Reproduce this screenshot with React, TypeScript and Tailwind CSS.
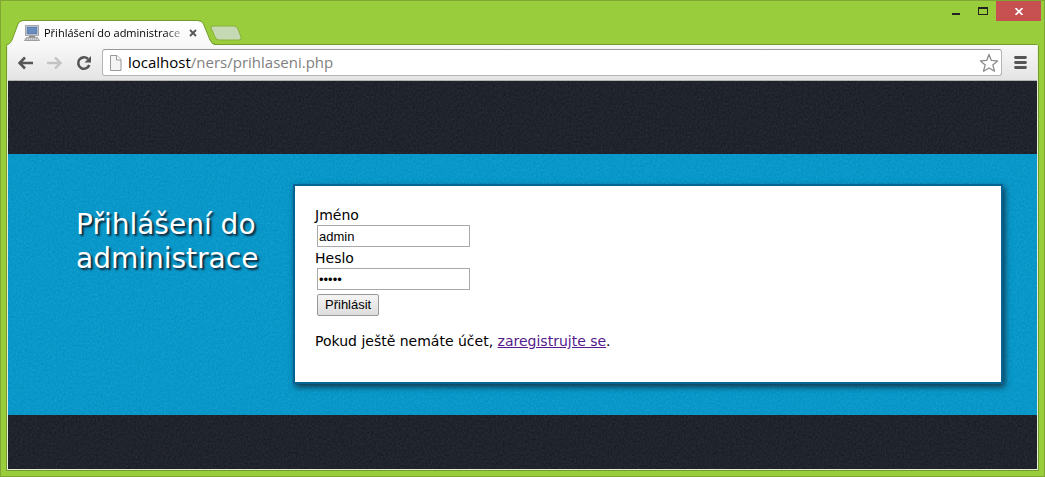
import React from "react";

type TextureProps = { id: string; strength: number };

function Texture({ id, strength }: TextureProps) {
  return (
    <svg className="pointer-events-none absolute inset-0 h-full w-full" aria-hidden="true">
      <filter id={id} x="0" y="0" width="100%" height="100%" colorInterpolationFilters="sRGB">
        <feTurbulence type="fractalNoise" baseFrequency="0.6 0.45" numOctaves="2" />
        <feColorMatrix type="saturate" values="0" />
        <feComponentTransfer>
          <feFuncR type="linear" slope="1.6" intercept="-0.3" />
          <feFuncG type="linear" slope="1.6" intercept="-0.3" />
          <feFuncB type="linear" slope="1.6" intercept="-0.3" />
          <feFuncA type="linear" slope="0" intercept="1" />
        </feComponentTransfer>
      </filter>
      <rect width="100%" height="100%" filter={`url(#${id})`} opacity={strength} />
    </svg>
  );
}

function TabStrip() {
  return (
    <div className="relative flex h-[45px] justify-between">
      <div className="relative z-10 ml-[5px] mt-5 h-[25px] w-[240px]">
        <svg className="absolute inset-0" width="240" height="25" viewBox="0 0 240 25" aria-hidden="true">
          <defs>
            <linearGradient id="tab-fill" x1="0" y1="0" x2="0" y2="1">
              <stop offset="0" stopColor="#ffffff" />
              <stop offset="1" stopColor="#f8f8f8" />
            </linearGradient>
          </defs>
          <path
            d="M1 25 C4 24 5 22 6 20 L12 4 Q13.500 1 17 1 H192 Q196 1 197.500 4 L204 20 Q206 25 210 25 Z"
            fill="url(#tab-fill)"
          />
          <path
            d="M0 25 C4 24 5 22 6 20 L12 4 Q13.500 .5 17 .5 H192 Q196 .5 197.500 4 L204 20 Q206 24.500 210 24.500"
            fill="none"
            stroke="#739b2d"
          />
          <path
            d="M207 6 H228 Q231 6 232 9 L235 17 Q236 20 233 20 H213 Q210 20 209 17 L205 8 Q204 6 207 6Z"
            fill="#c5d9b4"
            stroke="#86b136"
          />
        </svg>
        <div className="relative flex h-full items-center pl-[18px]">
          <svg width="16" height="16" viewBox="0 0 16 16" aria-hidden="true">
            <rect x="1.500" y=".5" width="13" height="10" fill="#dedede" stroke="#a8a8a8" />
            <rect x="3" y="2" width="10" height="7" fill="#6a8dc0" stroke="#4c6d9f" strokeWidth=".6" />
            <path d="M5 11h6v1H5z" fill="#888" />
            <path d="M2.500 12.500h11l2 3H.5z" fill="#d4d4d4" stroke="#8c8c8c" strokeWidth=".8" />
            <path d="M2 14h12" stroke="#909090" strokeDasharray="1 1" />
          </svg>
          <span className="ml-1 w-[139px] whitespace-nowrap bg-gradient-to-r from-black from-85% to-[#ccc] bg-clip-text font-['Open_Sans',sans-serif] text-[11px] leading-4 text-transparent">
            Přihlášení do administrace
          </span>
          <button type="button" aria-label="Zavřít kartu" className="ml-0.5 flex size-4 items-center justify-center">
            <svg width="8" height="8" viewBox="0 0 8 8">
              <path d="M1 1l6 6M7 1L1 7" stroke="#555" strokeWidth="1.800" />
            </svg>
          </button>
        </div>
      </div>
      <div className="mr-[3px] flex h-[21px] pt-px">
        <button type="button" aria-label="Minimalizovat" className="flex w-[27px] items-center justify-center">
          <svg width="10" height="10" viewBox="0 0 10 10">
            <path d="M1 7h8v2H1z" fill="#222" />
          </svg>
        </button>
        <button type="button" aria-label="Maximalizovat" className="flex w-[27px] items-center justify-center">
          <svg width="10" height="8" viewBox="0 0 10 8">
            <path d="M0 0h10v8H0zM1 2v5h8V2z" fill="#222" fillRule="evenodd" />
          </svg>
        </button>
        <button type="button" aria-label="Zavřít" className="flex w-[45px] items-center justify-center bg-[#c75050]">
          <svg width="8" height="7" viewBox="0 0 8 7">
            <path d="M.5 0l7 7M7.500 0l-7 7" stroke="#fff" strokeWidth="1.700" />
          </svg>
        </button>
      </div>
    </div>
  );
}

function Toolbar() {
  return (
    <div className="flex h-9 items-center border-b border-[#b5b5b5] bg-gradient-to-b from-[#f8f8f8] to-[#e4e4e4] pl-[10px] pr-[9px]">
      <button type="button" aria-label="Zpět">
        <svg width="15" height="14" viewBox="0 0 15 14">
          <path d="M7 1.500L1.500 7 7 12.500M2 7h13" fill="none" stroke="#555" strokeWidth="2.600" />
        </svg>
      </button>
      <button type="button" aria-label="Vpřed" className="ml-[14px]">
        <svg width="15" height="14" viewBox="0 0 15 14">
          <path d="M8 1.500L13.500 7 8 12.500M13 7H0" fill="none" stroke="#c3c3c3" strokeWidth="2.400" />
        </svg>
      </button>
      <button type="button" aria-label="Obnovit" className="ml-[14px]">
        <svg width="16" height="16" viewBox="0 0 16 16">
          <path d="M12 4A5.700 5.700 0 1 0 13.300 10" fill="none" stroke="#555" strokeWidth="2.600" />
          <path d="M15 1v6.500H8.500z" fill="#555" />
        </svg>
      </button>
      <div className="ml-[10px] flex h-[27px] flex-1 items-center rounded-[3px] border border-[#b4b4b4] border-t-[#999] bg-white px-[6px]">
        <svg width="13" height="16" viewBox="0 0 13 16" aria-hidden="true">
          <path d="M1.500 .5h6.500L12 4.500v11H1.500z" fill="#f4f4f4" stroke="#999" />
          <path d="M7.500 .5v4.500h4.500" fill="#fff" stroke="#999" />
        </svg>
        <div className="mb-0.5 ml-[6px] flex-1 font-['Open_Sans',sans-serif] text-[15px] leading-5 text-[#808080]">
          <span className="text-black">localhost</span>/ners/prihlaseni.php
        </div>
        <button type="button" aria-label="Přidat záložku" className="-mr-1">
          <svg width="20" height="20" viewBox="0 0 20 20">
            <path
              d="M10 1.500l2.300 5.900 6.200.5-4.700 4 1.700 6.300L10 15l-5.500 3.200 1.700-6.300-4.700-4 6.200-.5z"
              fill="#fff"
              stroke="#8b8b8b"
              strokeWidth="1.300"
              strokeLinejoin="round"
            />
          </svg>
        </button>
      </div>
      <button type="button" aria-label="Nabídka" className="ml-[11px]">
        <svg width="15" height="13" viewBox="0 0 15 13">
          <path d="M2.500 1.500h10M2.500 6.500h10M2.500 11.500h10" stroke="#555" strokeWidth="2.800" strokeLinecap="round" />
        </svg>
      </button>
    </div>
  );
}

function LoginForm() {
  return (
    <div className="min-h-[200px] flex-1 border-2 border-[#046392] bg-white px-5 pb-[30px] pt-5 text-[14px] leading-[21px] text-black shadow-[2px_3px_6px_0px_#123a50]">
      <form onSubmit={(e) => e.preventDefault()}>
        <label htmlFor="name" className="block h-[19px] leading-[19px]">
          Jméno
        </label>
        <input
          id="name"
          type="text"
          defaultValue="admin"
          className="mx-[2px] block h-[22px] w-[153px] border border-[#a9a9a9] bg-white px-px font-['Liberation_Sans',sans-serif] text-[13px]"
        />
        <label htmlFor="password" className="block h-[21px] leading-[22px]">
          Heslo
        </label>
        <input
          id="password"
          type="password"
          defaultValue="admin"
          className="mx-[2px] block h-[22px] w-[153px] border border-[#a9a9a9] bg-white px-px font-['Liberation_Sans',sans-serif] text-[13px]"
        />
        <button
          type="submit"
          className="mx-[2px] mt-1 block h-[22px] rounded-[2px] border border-[#999] bg-gradient-to-b from-[#f5f5f5] to-[#dddddd] px-[7px] font-['Liberation_Sans',sans-serif] text-[13px] leading-5"
        >
          Přihlásit
        </button>
      </form>
      <p className="mt-[15px]">
        Pokud ještě nemáte účet,{" "}
        <a href="#registrace" className="text-[#551a8b] underline">
          zaregistrujte se
        </a>
        .
      </p>
    </div>
  );
}

export default function App() {
  return (
    <div className="flex min-h-screen flex-col border border-[#7fa632] bg-[#9acd3c] font-['DejaVu_Sans',sans-serif]">
      <div className="-mt-px">
        <TabStrip />
      </div>
      <div className="mx-[5px] mb-[5px] -mt-px flex flex-1 flex-col rounded-t-[3px] border border-[#739b2d]">
        <div className="flex flex-1 flex-col border-x border-b border-[#e6eed8]">
          <Toolbar />
          <div className="relative isolate flex flex-1 flex-col bg-[#181c25]">
            <Texture id="dark-noise" strength={0.08} />
            <div className="h-[73px]" />
            <main className="relative isolate flex items-start bg-[#009acf] pb-[31px] pt-[30px] pr-[34px]">
              <Texture id="blue-noise" strength={0.07} />
              <h1 className="relative w-[285px] shrink-0 pl-[68px] pt-[24px] text-[28px] leading-[34px] text-white [text-shadow:2px_2px_2px_#123]">
                Přihlášení do administrace
              </h1>
              <div className="relative flex flex-1">
                <LoginForm />
              </div>
            </main>
          </div>
        </div>
      </div>
    </div>
  );
}
